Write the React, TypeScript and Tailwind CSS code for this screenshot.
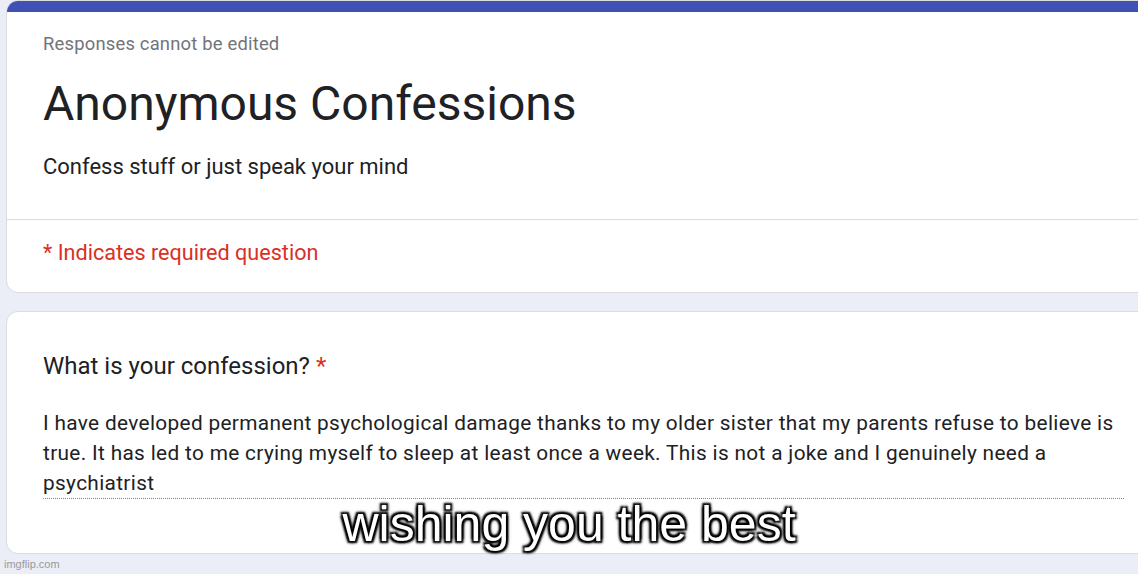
export default function App() {
  return (
    <div className="relative w-[1138px] h-[574px] overflow-hidden bg-[#ebedf7] pl-[6px] font-['Roboto',sans-serif]">
      {/* Header card */}
      <div className="w-[1150px] h-[293px] rounded-l-[12px] bg-white border border-[#dadce0] overflow-hidden flex flex-col">
        <div className="h-[11px] bg-[#3f51b5] shrink-0" />
        <div className="px-[36px] pt-[20px]">
          <p className="text-[18.4px] leading-[24px] text-[#70757a] tracking-[0.2px]">Responses cannot be edited</p>
          <h1 className="mt-[18px] text-[48px] leading-[60px] text-[#202124]">Anonymous Confessions</h1>
          <p className="mt-[18px] text-[22px] leading-[30px] text-[#202124]">Confess stuff or just speak your mind</p>
        </div>
        <div className="mt-[37px] border-t border-[#dadce0]" />
        <p className="px-[36px] pt-[19px] text-[21.6px] leading-[28px] text-[#d93025]">* Indicates required question</p>
      </div>

      {/* Question card */}
      <div className="mt-[18px] w-[1150px] h-[243px] rounded-l-[12px] bg-white border border-[#dadce0] px-[36px] pt-[38px]">
        <p className="text-[24px] leading-[32px] text-[#202124]">
          What is your confession? <span className="text-[#d93025]">*</span>
        </p>
        <div className="mt-[26px] w-[1081px] border-b border-dotted border-[#80868b]">
          <p className="text-[20.8px] leading-[30px] tracking-[0.34px] text-[#202124]">
            I have developed permanent psychological damage thanks to my older sister that my parents refuse to believe is true. It has led to me crying myself to sleep at least once a week. This is not a joke and I genuinely need a psychiatrist
          </p>
        </div>
      </div>

      {/* Meme caption */}
      <div className="absolute left-0 right-0 top-[497px] text-center font-['Liberation_Sans',Arial,sans-serif] text-[50px] leading-[54px] text-white [text-shadow:2px_2px_2px_#000,-2px_-2px_2px_#000,2px_-2px_2px_#000,-2px_2px_2px_#000,0_0_5px_#000]">
        wishing you the best
      </div>
      <div className="absolute left-[4px] bottom-[2px] font-['Liberation_Sans',Arial,sans-serif] text-[11px] text-[#9a9a9a]">imgflip.com</div>
    </div>
  );
}
